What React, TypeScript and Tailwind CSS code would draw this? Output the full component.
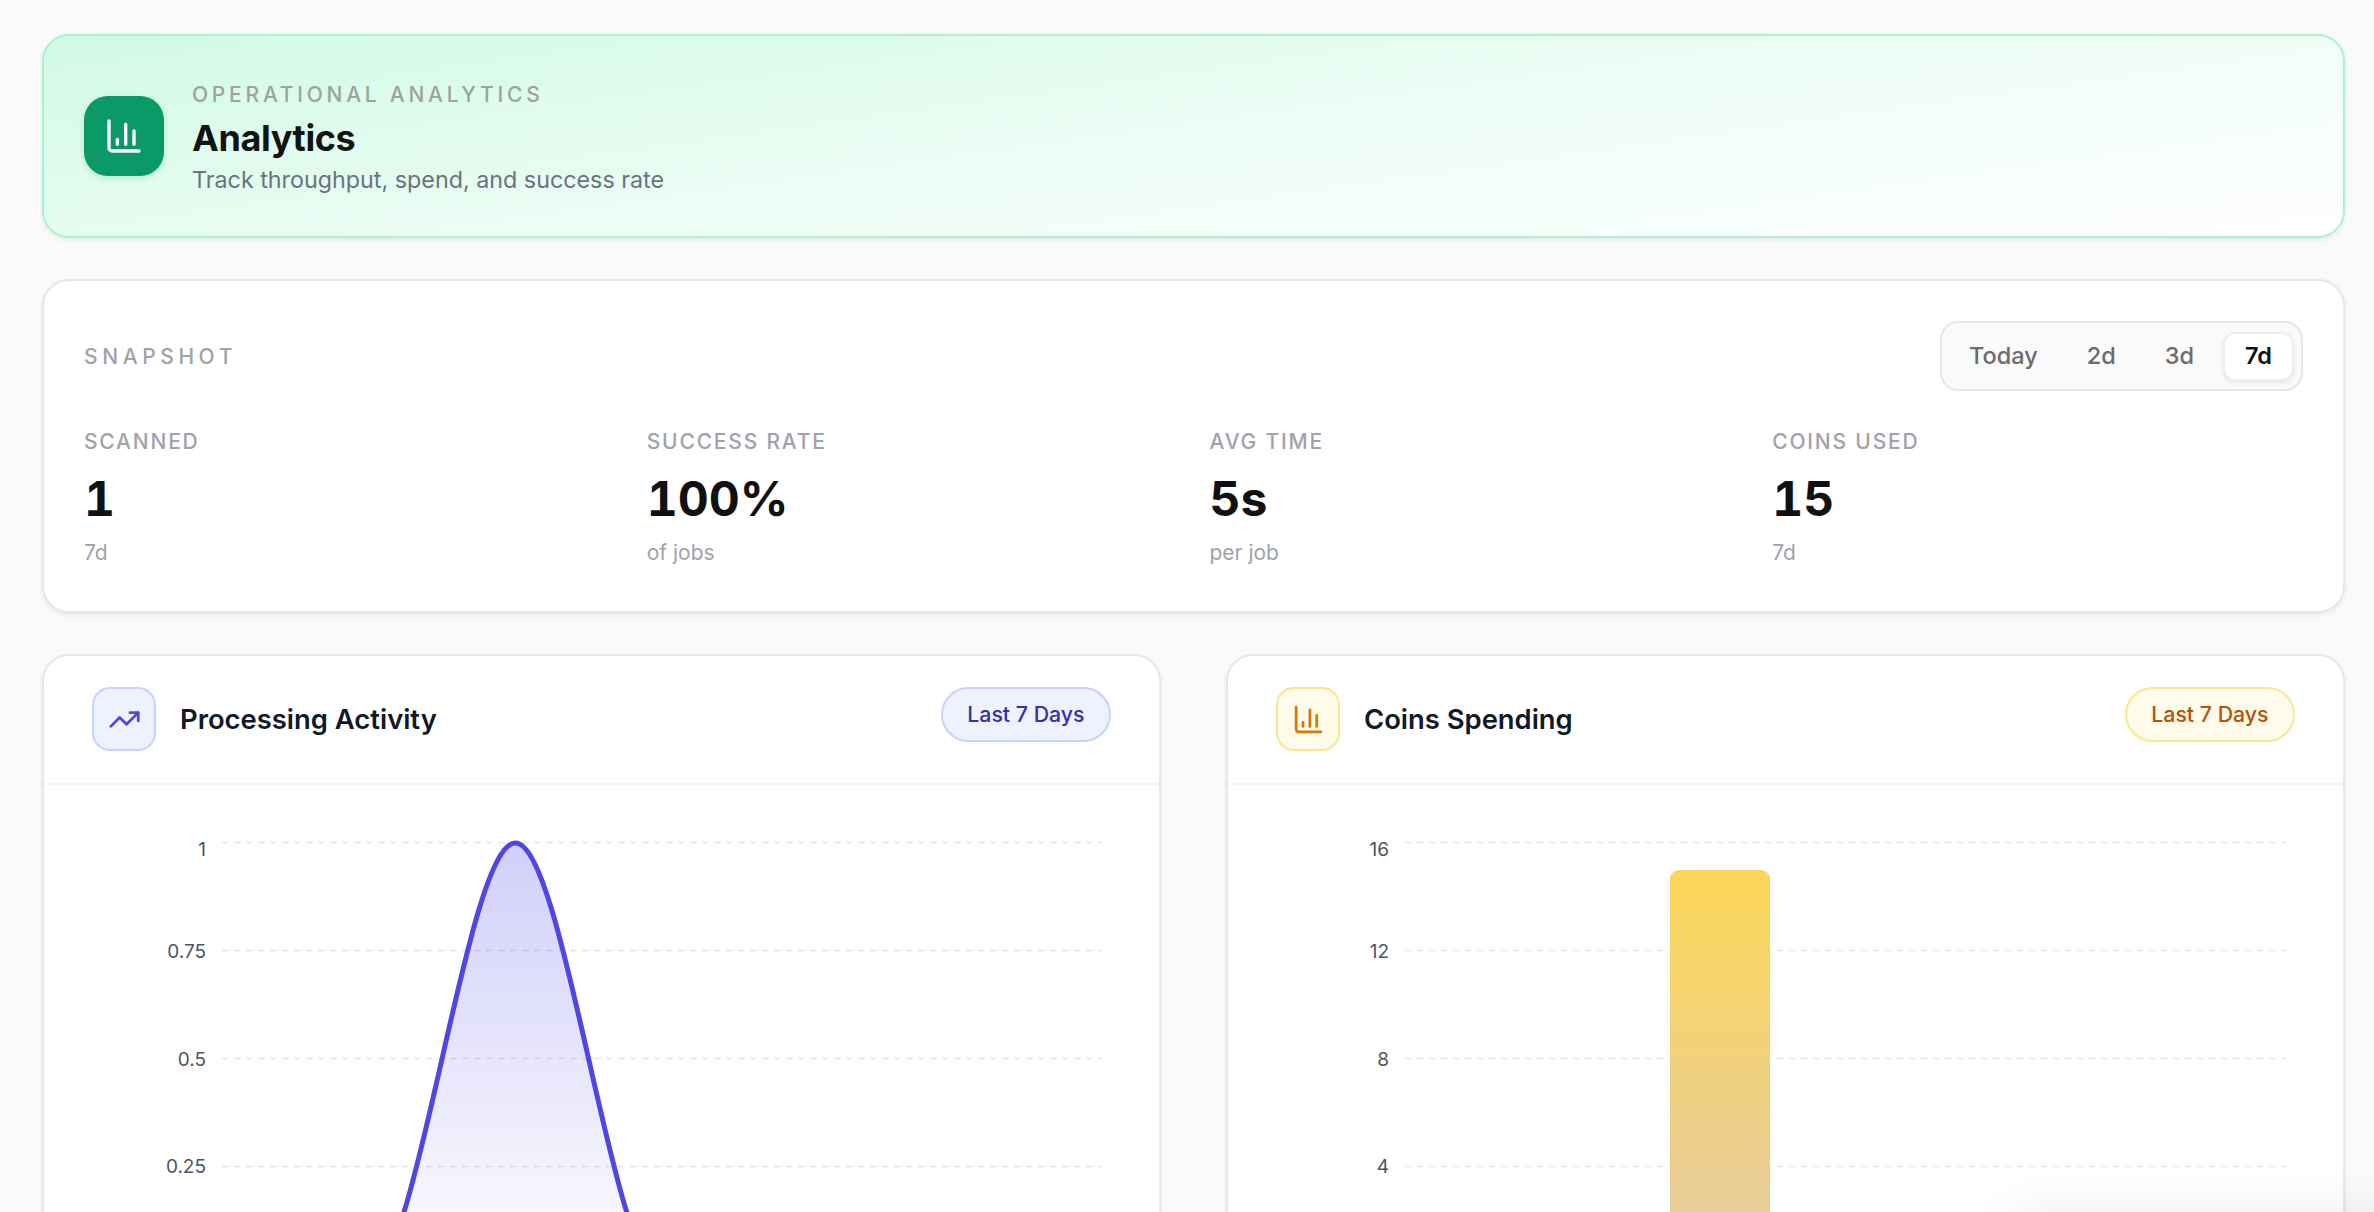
import React from "react";
import { ChartColumn, TrendingUp } from "lucide-react";

const stats = [
  { label: "SCANNED", value: "1", sub: "7d" },
  { label: "SUCCESS RATE", value: "100%", sub: "of jobs" },
  { label: "AVG TIME", value: "5s", sub: "per job" },
  { label: "COINS USED", value: "15", sub: "7d" },
];

function Grid({ x1, x2, labels, labelX }: { x1: number; x2: number; labels: string[]; labelX: number }) {
  const ys = [842.5, 950.5, 1058.5, 1166.5];
  const ty = [856, 958, 1066, 1173];
  return (
    <>
      {ys.map((y) => (
        <line key={y} x1={x1} x2={x2} y1={y} y2={y} stroke="#e5e5e5" strokeWidth={1.5} strokeDasharray="6.5 5.5" />
      ))}
      {labels.map((l, i) => (
        <text key={l} x={labelX} y={ty[i]} textAnchor="end" fontSize={19} fill="#4b5563" fontFamily="Inter, sans-serif">
          {l}
        </text>
      ))}
    </>
  );
}

function ChartHeader({
  title,
  iconBox,
  badge,
  icon,
}: {
  title: string;
  iconBox: string;
  badge: string;
  icon: React.ReactNode;
}) {
  return (
    <div className="flex items-start justify-between px-[48px] pt-[31px] pb-[32px] border-b-2 border-[#f3f4f6]">
      <div className="flex items-center gap-[24px]">
        <div className={`w-[64px] h-[64px] rounded-[18px] border-2 flex items-center justify-center ${iconBox}`}>{icon}</div>
        <div className="text-[27.4px] leading-[36px] font-semibold text-[#111827]">{title}</div>
      </div>
      <div className={`h-[55px] px-[24.5px] rounded-full border-2 flex items-center text-[21.3px] font-medium ${badge}`}>Last 7 Days</div>
    </div>
  );
}

export default function App() {
  return (
    <div className="relative h-[1212px] overflow-hidden bg-[#fafafa] font-['Inter',sans-serif] pl-[42px] pr-[29px] pt-[34px] flex flex-col gap-[41px]">
      <section className="shrink-0 h-[204px] rounded-[27px] border-2 border-[#a7f3d0] bg-[linear-gradient(172deg,#d1fae5_0%,#ecfdf5_50%,#ffffff_100%)] shadow-[0_2px_5px_rgba(0,0,0,0.08)] px-[40px] flex items-center gap-[28px]">
        <div className="w-[80px] h-[80px] rounded-[24px] bg-[#0a9a68] flex items-center justify-center shadow-[0_2px_6px_rgba(5,150,105,0.2)]">
          <ChartColumn size={40} color="#ffffff" strokeWidth={2} />
        </div>
        <div className="flex flex-col pt-[3px]">
          <div className="text-[21px] leading-[28px] font-medium tracking-[3.76px] text-[#9ca3a0]">OPERATIONAL ANALYTICS</div>
          <h1 className="text-[36px] leading-[48px] font-bold tracking-[-0.4px] text-[#111413] mt-[5px]">Analytics</h1>
          <p className="text-[23.3px] leading-[30px] text-[#6b7280] mt-[3px]">Track throughput, spend, and success rate</p>
        </div>
      </section>

      <section className="shrink-0 h-[334px] rounded-[27px] border-2 border-[#e5e7eb] bg-white shadow-[0_2px_5px_rgba(0,0,0,0.08)] px-[40px] pt-[40px]">
        <div className="flex items-center justify-between">
          <div className="text-[21px] font-medium tracking-[4.6px] text-[#a1a1aa] pt-[2px]">SNAPSHOT</div>
          <div className="flex items-center gap-[9px] p-[7px] h-[70px] rounded-[18px] border-2 border-[#e5e7eb] bg-[#fafafa]">
            {["Today", "2d", "3d"].map((t) => (
              <div key={t} className="px-[20px] h-[49px] flex items-center text-[23.5px] font-medium text-[#6b6b70]">{t}</div>
            ))}
            <div className="px-[20px] h-[49px] flex items-center text-[23.5px] font-semibold text-[#111111] bg-white rounded-[12px] border-2 border-[#eeeeee] shadow-[0_2px_4px_rgba(0,0,0,0.08)]">7d</div>
          </div>
        </div>
        <div className="grid grid-cols-4 gap-[32px] mt-[37px]">
          {stats.map((s) => (
            <div key={s.label}>
              <div className="text-[21px] leading-[27px] font-medium tracking-[1.8px] text-[#a1a1aa]">{s.label}</div>
              <div className="text-[48px] leading-[60px] font-bold tabular-nums text-[#111111] mt-[14px]">{s.value}</div>
              <div className="text-[21px] leading-[27px] text-[#a1a1aa] mt-[10px]">{s.sub}</div>
            </div>
          ))}
        </div>
      </section>

      <div className="grid grid-cols-2 gap-[65px] shrink-0">
        <section className="rounded-[27px] border-2 border-[#e5e7eb] bg-white shadow-[0_2px_5px_rgba(0,0,0,0.08)]">
          <ChartHeader
            title="Processing Activity"
            iconBox="bg-[#eef2ff] border-[#c7d2fe]"
            badge="bg-[#eef2ff] border-[#c7d2fe] text-[#3730a3]"
            icon={<TrendingUp size={33} color="#4f46e5" strokeWidth={2} />}
          />
          <svg viewBox="44 785 1115 520" className="block w-[1115px] h-[520px]">
            <defs>
              <linearGradient id="area" x1="0" y1="843" x2="0" y2="1275" gradientUnits="userSpaceOnUse">
                <stop offset="0" stopColor="#4f46e5" stopOpacity={0.26} />
                <stop offset="1" stopColor="#4f46e5" stopOpacity={0.01} />
              </linearGradient>
            </defs>
            <Grid x1={222} x2={1102} labels={["1", "0.75", "0.5", "0.25"]} labelX={206} />
            <path d="M368.7 1275 C417.6 1275 466.4 843 515.3 843 C564.2 843 613.1 1275 662 1275 Z" fill="url(#area)" />
            <path d="M222 1275 L368.7 1275 C417.6 1275 466.4 843 515.3 843 C564.2 843 613.1 1275 662 1275 L1102 1275" fill="none" stroke="#4f46e5" strokeWidth={5} />
          </svg>
        </section>

        <section className="rounded-[27px] border-2 border-[#e5e7eb] bg-white shadow-[0_2px_5px_rgba(0,0,0,0.08)]">
          <ChartHeader
            title="Coins Spending"
            iconBox="bg-[#fffbeb] border-[#fde68a]"
            badge="bg-[#fffbeb] border-[#fde68a] text-[#b45309]"
            icon={<ChartColumn size={33} color="#d97706" strokeWidth={2} />}
          />
          <svg viewBox="1228 785 1115 520" className="block w-[1115px] h-[520px]">
            <defs>
              <linearGradient id="bar" x1="0" y1="870" x2="0" y2="1275" gradientUnits="userSpaceOnUse">
                <stop offset="0" stopColor="#fbd349" stopOpacity={0.92} />
                <stop offset="1" stopColor="#e3c79d" stopOpacity={0.92} />
              </linearGradient>
            </defs>
            <Grid x1={1405} x2={2286} labels={["16", "12", "8", "4"]} labelX={1389} />
            <path d="M1670 1275 V879 a9 9 0 0 1 9 -9 H1761 a9 9 0 0 1 9 9 V1275 Z" fill="url(#bar)" />
          </svg>
        </section>
      </div>

      <div className="absolute right-[-40px] bottom-[-100px] w-[400px] h-[80px] rounded-[20px] bg-white shadow-[0_-8px_60px_rgba(0,0,0,0.12)]" />
    </div>
  );
}
